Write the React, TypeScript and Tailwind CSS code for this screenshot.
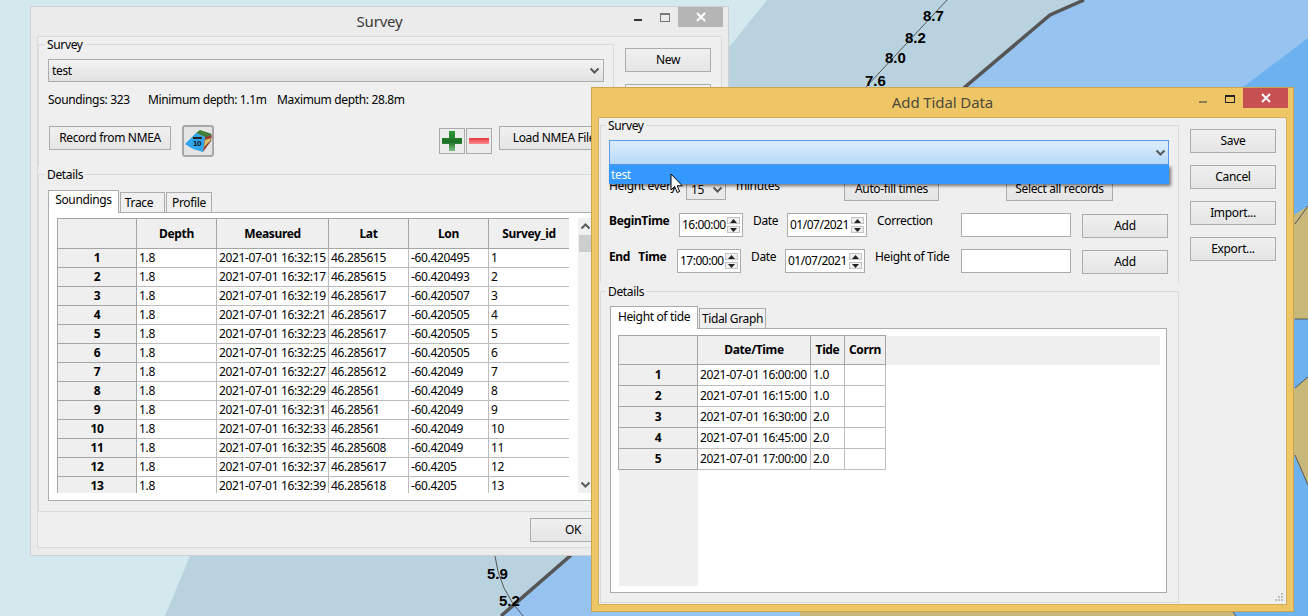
import type { ReactNode } from 'react';

const soundings = [
  ['1.8', '2021-07-01 16:32:15', '46.285615', '-60.420495'],
  ['1.8', '2021-07-01 16:32:17', '46.285615', '-60.420493'],
  ['1.8', '2021-07-01 16:32:19', '46.285617', '-60.420507'],
  ['1.8', '2021-07-01 16:32:21', '46.285617', '-60.420505'],
  ['1.8', '2021-07-01 16:32:23', '46.285617', '-60.420505'],
  ['1.8', '2021-07-01 16:32:25', '46.285617', '-60.420505'],
  ['1.8', '2021-07-01 16:32:27', '46.285612', '-60.42049'],
  ['1.8', '2021-07-01 16:32:29', '46.28561', '-60.42049'],
  ['1.8', '2021-07-01 16:32:31', '46.28561', '-60.42049'],
  ['1.8', '2021-07-01 16:32:33', '46.28561', '-60.42049'],
  ['1.8', '2021-07-01 16:32:35', '46.285608', '-60.42049'],
  ['1.8', '2021-07-01 16:32:37', '46.285617', '-60.4205'],
  ['1.8', '2021-07-01 16:32:39', '46.285618', '-60.4205'],
];

const tides = [
  ['2021-07-01 16:00:00', '1.0'],
  ['2021-07-01 16:15:00', '1.0'],
  ['2021-07-01 16:30:00', '2.0'],
  ['2021-07-01 16:45:00', '2.0'],
  ['2021-07-01 17:00:00', '2.0'],
];

const depthLabels = [
  { text: '8.7', pos: 'left-[923px] top-[7px]' },
  { text: '8.2', pos: 'left-[905px] top-[29px]' },
  { text: '8.0', pos: 'left-[885px] top-[49px]' },
  { text: '7.6', pos: 'left-[865px] top-[72px]' },
  { text: '5.9', pos: 'left-[487px] top-[565px]' },
  { text: '5.2', pos: 'left-[499px] top-[592px]' },
];

const MapBackground = () => (
  <svg className="absolute inset-0" width="1308" height="616" viewBox="0 0 1308 616">
    <rect width="1308" height="616" fill="#d3e9ee" />
    <polygon points="767,0 730,46 190,556 165,616 1308,616 1308,0" fill="#b9d2df" />
    <polygon points="1084,0 1050,15 965,87 570,556 501,616 1308,616 1308,0" fill="#96c3ef" />
    <polygon points="1308,38 1243,87 1000,300 800,616 1308,616" fill="#6db2ee" />
    <polygon points="1280,224 1308,206 1308,319 1280,319" fill="#c8b87a" />
    <polygon points="1280,400 1308,377 1308,485 1280,425" fill="#c8b87a" />
    <polygon points="800,612 1233,612 1235,616 800,616" fill="#c8b87a" />
    <polyline points="1084,0 1050,15 965,87 570,556 501,616" fill="none" stroke="#555" strokeWidth="3.5" />
    <path d="M947 0 L866 87" stroke="#555" strokeWidth="1" fill="none" />
    <path d="M495 556 Q499 590 523 616" stroke="#555" strokeWidth="1" fill="none" />
    <path d="M1295 224 L1308 206 M1295 319 L1308 319 M1295 388 L1308 377 M1295 455 L1308 485 M1233 612 L1236 616" stroke="#555" strokeWidth="1" fill="none" />
  </svg>
);

const Chevron = ({ up = false }: { up?: boolean }) => (
  <svg width="11" height="8" viewBox="0 0 11 8" className={up ? 'rotate-180' : ''}>
    <path d="M1.5 1.5 L5.5 5.5 L9.5 1.5" fill="none" stroke="#5a5a5a" strokeWidth="2" />
  </svg>
);

const Btn = ({ className, children }: { className: string; children: ReactNode }) => (
  <div className={`flex shrink-0 items-center justify-center whitespace-nowrap border border-[#acacac] bg-gradient-to-b from-[#f0f0f0] to-[#e5e5e5] ${className}`}>
    {children}
  </div>
);

const CloseIcon = () => (
  <svg width="10" height="10" viewBox="0 0 10 10">
    <path d="M1 1 L9 9 M9 1 L1 9" stroke="#fff" strokeWidth="2" />
  </svg>
);

const GroupBox = ({
  label,
  labelLeft = 'left-[6px]',
  className,
  children,
}: {
  label: string;
  labelLeft?: string;
  className: string;
  children: ReactNode;
}) => (
  <div className={`relative border border-[#dadada] ${className}`}>
    <span className={`absolute top-[-8px] bg-[#efefef] px-[2px] leading-[16px] ${labelLeft}`}>{label}</span>
    {children}
  </div>
);

const Tab = ({ active, className, children }: { active?: boolean; className: string; children: ReactNode }) =>
  active ? (
    <div className={`z-10 mb-[-1px] flex h-[23px] items-center justify-center whitespace-nowrap border border-b-0 border-[#acacac] bg-white pb-[4px] ${className}`}>
      {children}
    </div>
  ) : (
    <div className={`ml-[1px] flex h-[20px] items-center justify-center whitespace-nowrap border border-b-0 border-[#acacac] bg-[#f0f0f0] ${className}`}>
      {children}
    </div>
  );

const SpinArrows = () => (
  <div className="flex flex-col gap-[2px]">
    <div className="flex h-[7px] w-[13px] items-center justify-center border border-[#c4c4c4] bg-[#f0f0f0]">
      <svg width="7" height="4" viewBox="0 0 7 4"><polygon points="3.5,0 7,4 0,4" fill="#222" /></svg>
    </div>
    <div className="flex h-[7px] w-[13px] items-center justify-center border border-[#c4c4c4] bg-[#f0f0f0]">
      <svg width="7" height="4" viewBox="0 0 7 4"><polygon points="0,0 7,0 3.5,4" fill="#222" /></svg>
    </div>
  </div>
);

const SpinBox = ({ value, className }: { value: string; className: string }) => (
  <div className={`flex h-[24px] shrink-0 items-center justify-between border border-[#acacac] bg-white pl-[2px] pr-[2px] tracking-[-0.5px] ${className}`}>
    <span>{value}</span>
    <SpinArrows />
  </div>
);

const TimeRow = ({
  label,
  labelWidth,
  captionWidth,
  caption,
  time,
  className,
}: {
  label: ReactNode;
  labelWidth: string;
  captionWidth: string;
  caption: string;
  time: string;
  className: string;
}) => (
  <div className={`ml-[8px] flex items-start ${className}`}>
    <div className={`shrink-0 font-bold leading-[15px] ${labelWidth}`}>{label}</div>
    <SpinBox value={time} className="w-[64px]" />
    <div className="ml-[10px] w-[34px] shrink-0 leading-[15px]">Date</div>
    <SpinBox value="01/07/2021" className="w-[80px]" />
    <div className={`ml-[10px] shrink-0 whitespace-nowrap leading-[15px] ${captionWidth}`}>{caption}</div>
    <div className="h-[24px] w-[110px] shrink-0 border border-[#acacac] bg-white" />
    <Btn className="ml-[11px] mt-[1px] h-[24px] w-[86px]">Add</Btn>
  </div>
);

const headCell = 'border border-[#a5a5a5] bg-[#efefef] p-0 text-center font-bold';
const rowHead = 'border border-[#a5a5a5] bg-[#efefef] p-0 text-center font-bold';
const dataCell = 'border border-[#bdbdbd] px-[2px] py-0 text-left font-normal whitespace-nowrap overflow-hidden';

const SurveyWindow = () => (
  <div className="absolute left-[30px] top-[6px] flex h-[550px] w-[699px] flex-col border border-[#d0d0d0] bg-[#ebebeb]">
    <div className="relative flex h-[29px] shrink-0 items-center justify-center text-[15px] tracking-[-0.2px] text-[#3a3a3a]">
      Survey
      <div className="absolute right-[5px] top-0 flex items-start">
        <div className="mr-[18px] mt-[12px] h-[2px] w-[8px] bg-[#333]" />
        <div className="mr-[8px] mt-[6px] h-[9px] w-[10px] border border-[#777] border-t-2" />
        <div className="flex h-[20px] w-[45px] items-center justify-center bg-[#b5b5b5]">
          <CloseIcon />
        </div>
      </div>
    </div>
    <div className="mx-[6px] flex h-[512px] flex-col border border-[#dadada] bg-[#efefef]">
      <div className="flex h-[129px] shrink-0">
        <GroupBox label="Survey" className="mt-[7px] h-[122px] w-[576px] border-b-0">
          <div className="ml-[9px] mt-[14px] flex h-[23px] w-[556px] items-center justify-between border border-[#acacac] bg-gradient-to-b from-[#f3f3f3] to-[#e2e2e2] pl-[3px] pr-[3px]">
            test
            <Chevron />
          </div>
          <div className="ml-[9px] mt-[9px] flex h-[18px] items-center">
            <span className="w-[100px]">Soundings: 323</span>
            <span className="w-[129px]">Minimum depth: 1.1m</span>
            <span>Maximum depth: 28.8m</span>
          </div>
          <div className="mt-[16px] flex items-start">
            <Btn className="ml-[10px] mt-px h-[24px] w-[122px]">Record from NMEA</Btn>
            <div className="ml-[11px] flex h-[32px] w-[32px] items-center justify-center rounded-[3px] border-2 border-[#a8a8a8] bg-[#e4e4e4]">
              <svg width="28" height="24" viewBox="0 0 28 24">
                <polygon points="1,15 12,4 21,8 19,23 9,20" fill="#2fa6ee" />
                <polygon points="12,4 16,1 28,5 24,9 21,8" fill="#3f7d3a" />
                <polygon points="21,8 28,6 27,12 19,23" fill="#8f3f33" />
                <polygon points="21,11 27,9 26,12 20,18" fill="#d9c36a" />
                <rect x="9" y="8" width="9" height="2" fill="#222" />
                <text x="9" y="17" fontSize="8" fontWeight="700" fill="#111" fontFamily="Liberation Sans, sans-serif">10</text>
              </svg>
            </div>
            <div className="ml-[225px] mt-[3px] flex h-[26px] w-[26px] items-center justify-center border border-[#acacac] bg-[#ececec]">
              <svg width="20" height="20" viewBox="0 0 20 20">
                <defs>
                  <linearGradient id="plusFill" x1="0" y1="0" x2="0" y2="1">
                    <stop offset="0" stopColor="#2f9a3a" />
                    <stop offset="0.55" stopColor="#1c6f26" />
                    <stop offset="1" stopColor="#7cc184" />
                  </linearGradient>
                </defs>
                <path d="M7 0 H13 V7 H20 V13 H13 V20 H7 V13 H0 V7 H7 Z" fill="url(#plusFill)" />
              </svg>
            </div>
            <div className="ml-px mt-[3px] flex h-[26px] w-[26px] items-center justify-center border border-[#acacac] bg-[#ececec]">
              <div className="h-[6px] w-[20px] bg-gradient-to-b from-[#e8303a] to-[#f98a90]" />
            </div>
            <Btn className="ml-[7px] mt-px h-[24px] w-[110px]">Load NMEA File</Btn>
          </div>
        </GroupBox>
        <div className="ml-[11px] mt-[11px] flex flex-col gap-[12px]">
          <Btn className="h-[24px] w-[86px]">New</Btn>
          <Btn className="h-[24px] w-[86px]">Edit</Btn>
        </div>
      </div>
      <GroupBox label="Details" className="mt-[8px] h-[338px] w-[680px]">
        <div className="ml-[9px] mt-[15px] flex h-[22px] items-end">
          <Tab active className="w-[71px]">Soundings</Tab>
          <Tab className="w-[45px] pr-[7px]">Trace</Tab>
          <Tab className="w-[46px]">Profile</Tab>
        </div>
        <div className="ml-[9px] flex h-[289px] w-[660px] items-start border border-[#acacac] bg-white pl-[8px] pt-[5px]">
          <div className="h-[275px] w-[512px] overflow-hidden">
            <table className="w-[512px] table-fixed border-collapse">
              <colgroup>
                <col className="w-[79px]" />
                <col className="w-[80px]" />
                <col className="w-[112px]" />
                <col className="w-[80px]" />
                <col className="w-[80px]" />
                <col className="w-[81px]" />
              </colgroup>
              <thead>
                <tr className="h-[30px]">
                  <th className={headCell} />
                  <th className={headCell}>Depth</th>
                  <th className={headCell}>Measured</th>
                  <th className={headCell}>Lat</th>
                  <th className={headCell}>Lon</th>
                  <th className={headCell}>Survey_id</th>
                </tr>
              </thead>
              <tbody>
                {soundings.map((row, i) => (
                  <tr key={i} className="h-[19px]">
                    <th className={rowHead}>{i + 1}</th>
                    {row.map((value, j) => (
                      <td key={j} className={dataCell}>{value}</td>
                    ))}
                    <td className={dataCell}>{i + 1}</td>
                  </tr>
                ))}
              </tbody>
            </table>
          </div>
          <div className="ml-[9px] flex h-[275px] w-[14px] flex-col items-center bg-[#f0f0f0] py-[4px]">
            <Chevron up />
            <div className="mt-[5px] h-[17px] w-[13px] bg-[#cdcdcd]" />
            <div className="mt-auto">
              <Chevron />
            </div>
          </div>
        </div>
      </GroupBox>
      <div className="flex justify-start pl-[492px] pt-[6px]">
        <Btn className="h-[24px] w-[86px]">OK</Btn>
      </div>
    </div>
  </div>
);

const TidalWindow = () => (
  <div className="absolute left-[591px] top-[87px] flex h-[525px] w-[703px] flex-col border border-[#c9a550] bg-[#efc666]">
    <div className="relative flex h-[29px] shrink-0 items-center justify-center text-[15px] tracking-[-0.1px] text-[#4d4a3c]">
      Add Tidal Data
      <div className="absolute right-[5px] top-0 flex items-start">
        <div className="mr-[18px] mt-[13px] h-[2px] w-[8px] bg-[#8d7d50]" />
        <div className="mr-[8px] mt-[7px] h-[8px] w-[10px] border border-t-2 border-[#222]" />
        <div className="flex h-[20px] w-[45px] items-center justify-center bg-[#c75050]">
          <CloseIcon />
        </div>
      </div>
    </div>
    <div className="relative mx-[6px] flex h-[488px] border border-[#d2ad5a] bg-[#efefef]">
      <div className="ml-px flex w-[580px] shrink-0 flex-col">
        <GroupBox label="Survey" labelLeft="left-[5px]" className="mt-[7px] h-[158px] w-[579px] border-b-0">
          <div className="relative ml-[8px] mt-[14px] flex h-[25px] w-[560px] items-center justify-end border border-[#5b9be6] bg-gradient-to-b from-[#dcedfc] to-[#b8d9f8] pr-[2px]">
            <Chevron />
            <div className="absolute left-[-1px] top-[24px] z-20 flex h-[19px] w-[560px] items-center bg-[#3399ff] pl-[2px] text-white shadow-[2px_2px_3px_rgba(0,0,0,0.5)]">
              test
            </div>
          </div>
          <div className="ml-[8px] mt-[12px] flex h-[24px] items-start">
            <div className="mt-[1px] w-[77px] shrink-0 leading-[16px]">Height every</div>
            <div className="mt-[2px] flex h-[21px] w-[40px] shrink-0 items-center justify-between border border-[#acacac] bg-[#eaeaea] pl-[4px] pr-[2px]">
              15
              <Chevron />
            </div>
            <div className="ml-[10px] mt-[1px] w-[108px] shrink-0 leading-[16px]">minutes</div>
            <Btn className="h-[24px] w-[95px]">Auto-fill times</Btn>
            <Btn className="ml-[67px] h-[24px] w-[107px]">Select all records</Btn>
          </div>
          <TimeRow
            className="mt-[12px]"
            label="BeginTime"
            labelWidth="w-[70px]"
            time="16:00:00"
            caption="Correction"
            captionWidth="w-[84px]"
          />
          <TimeRow
            className="mt-[11px]"
            label={<span>End&nbsp;&nbsp;&nbsp;Time</span>}
            labelWidth="w-[68px]"
            time="17:00:00"
            caption="Height of Tide"
            captionWidth="w-[86px]"
          />
        </GroupBox>
        <GroupBox label="Details" labelLeft="left-[5px]" className="mt-[8px] h-[312px] w-[579px]">
          <div className="ml-[9px] mt-[14px] flex h-[22px] items-end">
            <Tab active className="w-[88px] pt-[2px]">Height of tide</Tab>
            <Tab className="w-[67px]">Tidal Graph</Tab>
          </div>
          <div className="ml-[9px] h-[265px] w-[557px] border border-[#acacac] bg-white pl-[7px] pt-[6px]">
            <table className="w-[542px] table-fixed border-collapse">
              <colgroup>
                <col className="w-[79px]" />
                <col className="w-[113px]" />
                <col className="w-[34px]" />
                <col className="w-[41px]" />
                <col />
              </colgroup>
              <thead>
                <tr className="h-[29px]">
                  <th className={headCell} />
                  <th className={headCell}>Date/Time</th>
                  <th className={headCell}>Tide</th>
                  <th className={headCell}>Corrn</th>
                  <th className="bg-[#efefef] p-0" />
                </tr>
              </thead>
              <tbody>
                {tides.map((row, i) => (
                  <tr key={i} className="h-[21px]">
                    <th className={rowHead}>{i + 1}</th>
                    <td className={dataCell}>{row[0]}</td>
                    <td className={dataCell}>{row[1]}</td>
                    <td className={dataCell} />
                    <td className="p-0" />
                  </tr>
                ))}
                <tr className="h-[116px]">
                  <td className="bg-[#efefef] p-0" />
                  <td colSpan={4} className="p-0" />
                </tr>
              </tbody>
            </table>
          </div>
        </GroupBox>
      </div>
      <div className="ml-[10px] mt-[11px] flex flex-col gap-[12px]">
        <Btn className="h-[24px] w-[86px]">Save</Btn>
        <Btn className="h-[24px] w-[86px]">Cancel</Btn>
        <Btn className="h-[24px] w-[86px]">Import...</Btn>
        <Btn className="h-[24px] w-[86px]">Export...</Btn>
      </div>
      <svg className="absolute bottom-[2px] right-[2px]" width="9" height="9" viewBox="0 0 9 9" fill="#bdbdbd">
        <rect x="6" y="0" width="2" height="2" />
        <rect x="3" y="3" width="2" height="2" />
        <rect x="6" y="3" width="2" height="2" />
        <rect x="0" y="6" width="2" height="2" />
        <rect x="3" y="6" width="2" height="2" />
        <rect x="6" y="6" width="2" height="2" />
      </svg>
    </div>
  </div>
);

export default function App() {
  return (
    <div className="relative h-[616px] w-[1308px] overflow-hidden font-['Noto_Sans',sans-serif] text-[12px] tracking-[-0.35px] text-black">
      <MapBackground />
      {depthLabels.map((label) => (
        <span
          key={label.text}
          className={`absolute font-['Liberation_Sans',sans-serif] text-[15px] font-bold leading-[18px] tracking-normal ${label.pos}`}
        >
          {label.text}
        </span>
      ))}
      <SurveyWindow />
      <TidalWindow />
      <svg className="absolute left-[670px] top-[173px] z-30" width="14" height="21" viewBox="0 0 14 21">
        <path d="M1 1 V17 L4.7 13.5 L7.2 19.5 L9.7 18.5 L7.2 12.8 H12.3 Z" fill="#fff" stroke="#000" strokeWidth="1" />
      </svg>
    </div>
  );
}
